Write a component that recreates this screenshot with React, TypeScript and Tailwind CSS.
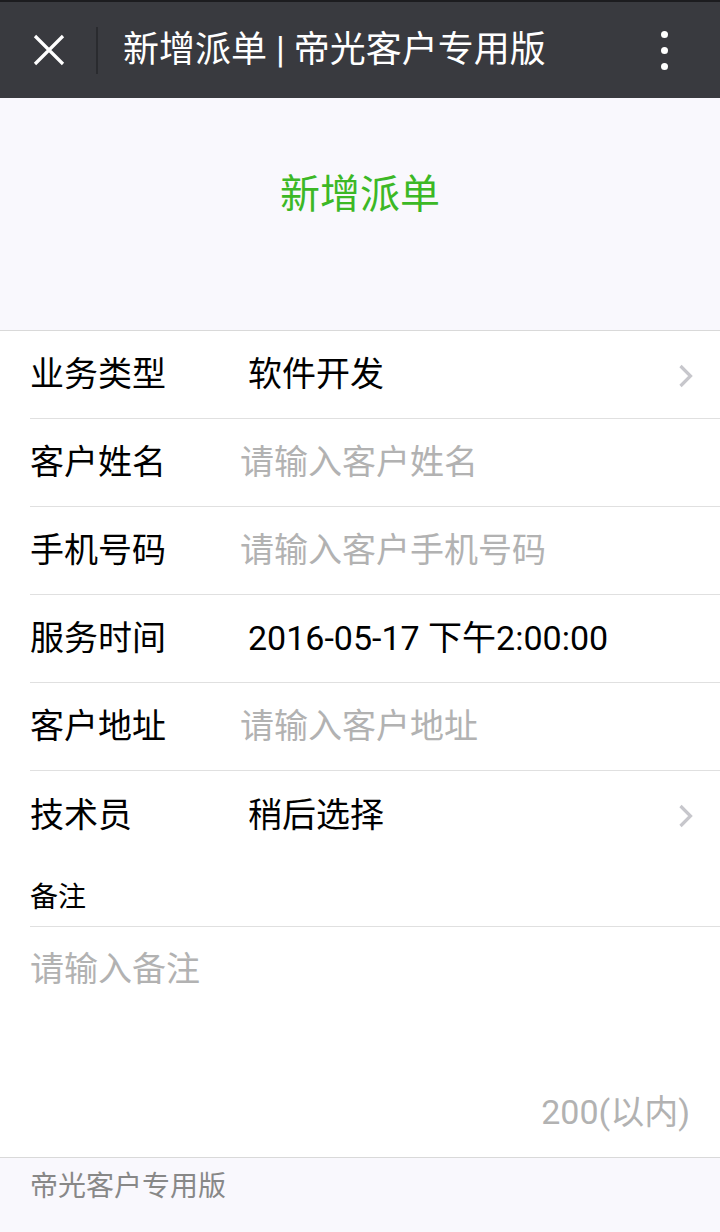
import { useState } from 'react';

const rows = [
  { label: '业务类型', value: '软件开发', kind: 'select' },
  { label: '客户姓名', value: '请输入客户姓名', kind: 'input' },
  { label: '手机号码', value: '请输入客户手机号码', kind: 'input' },
  { label: '服务时间', value: '2016-05-17 下午2:00:00', kind: 'text' },
  { label: '客户地址', value: '请输入客户地址', kind: 'input' },
  { label: '技术员', value: '稍后选择', kind: 'select' },
];

function Chevron() {
  return (
    <svg width="16" height="24" viewBox="0 0 16 24" className="shrink-0">
      <polyline points="2.5,2 12.5,12 2.5,22" fill="none" stroke="#c7c7cc" strokeWidth="3.2" />
    </svg>
  );
}

export default function App() {
  const [note, setNote] = useState('');

  return (
    <div
      className="w-[720px] h-[1232px] bg-[#f9f8fd] flex flex-col overflow-hidden"
      style={{ fontFamily: 'Roboto, "Noto Sans CJK SC", sans-serif' }}
    >
      {/* header */}
      <div className="h-[98px] shrink-0 bg-[#393a3f] border-t-2 border-[#1c1c1f] flex items-center">
        <div className="w-[96px] flex justify-center pl-[2px]">
          <svg width="32" height="32" viewBox="0 0 32 32">
            <path d="M2 2 L30 30 M30 2 L2 30" stroke="#fff" strokeWidth="3.2" />
          </svg>
        </div>
        <div className="w-[2px] h-[47px] bg-[#2a2b2f]" />
        <div className="flex-1 pl-[25px] text-[36px] leading-[40px] text-white">新增派单 | 帝光客户专用版</div>
        <div className="w-[60px] mr-[32px] flex flex-col items-center gap-[9px] pl-[12px]">
          <span className="w-[7px] h-[7px] rounded-full bg-white" />
          <span className="w-[7px] h-[7px] rounded-full bg-white" />
          <span className="w-[7px] h-[7px] rounded-full bg-white" />
        </div>
      </div>

      {/* hero */}
      <div className="h-[232px] shrink-0 pt-[77px] text-center text-[40px] leading-[40px] text-[#3cb826]">新增派单</div>

      {/* form */}
      <div className="bg-white border-t border-[#d9d9d9]">
        {rows.map((row, i) => (
          <div key={row.label} className="pl-[30px]">
            <div
              className={`h-[88px] flex items-center ${i < rows.length - 1 ? 'border-b border-[#e0e0e0]' : ''}`}
            >
              <div className="w-[212px] shrink-0 text-[34px] text-black">{row.label}</div>
              <div
                className={`flex-1 text-[34px] ${row.kind === 'input' ? 'text-[#b2b2b2] -ml-[2px]' : 'text-black pl-[6px]'}`}
              >
                {row.value}
              </div>
              {row.kind === 'select' && (
                <div className="pr-[26px] pt-[2px]">
                  <Chevron />
                </div>
              )}
            </div>
          </div>
        ))}
        <div className="pl-[30px]">
          <div className="h-[68px] pt-[25px] text-[28px] leading-[28px] text-black border-b border-[#e0e0e0]">备注</div>
        </div>
        <div className="h-[230px] px-[30px] flex flex-col">
          <textarea
            value={note}
            onChange={(e) => setNote(e.target.value)}
            placeholder="请输入备注"
            className="flex-1 pt-[20px] text-[34px] leading-[44px] text-black placeholder:text-[#b2b2b2] outline-none resize-none bg-transparent"
          />
          <div className="text-right text-[34px] leading-[40px] text-[#b2b2b2] pb-[25px]">200(以内)</div>
        </div>
      </div>

      {/* footer */}
      <div className="border-t border-[#d9d9d9] pl-[30px] pt-[14px] text-[28px] leading-[30px] text-[#888]">帝光客户专用版</div>
    </div>
  );
}
